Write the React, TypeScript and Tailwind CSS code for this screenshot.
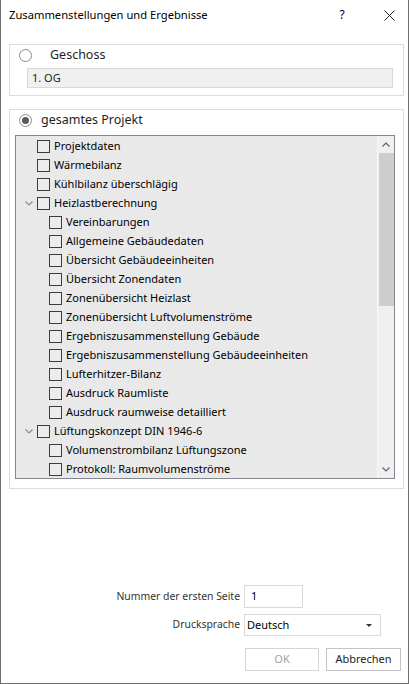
import React from 'react';

type Item = { label: string; level: 0 | 1; expander?: boolean };

const items: Item[] = [
  { label: 'Projektdaten', level: 0 },
  { label: 'Wärmebilanz', level: 0 },
  { label: 'Kühlbilanz überschlägig', level: 0 },
  { label: 'Heizlastberechnung', level: 0, expander: true },
  { label: 'Vereinbarungen', level: 1 },
  { label: 'Allgemeine Gebäudedaten', level: 1 },
  { label: 'Übersicht Gebäudeeinheiten', level: 1 },
  { label: 'Übersicht Zonendaten', level: 1 },
  { label: 'Zonenübersicht Heizlast', level: 1 },
  { label: 'Zonenübersicht Luftvolumenströme', level: 1 },
  { label: 'Ergebniszusammenstellung Gebäude', level: 1 },
  { label: 'Ergebniszusammenstellung Gebäudeeinheiten', level: 1 },
  { label: 'Lufterhitzer-Bilanz', level: 1 },
  { label: 'Ausdruck Raumliste', level: 1 },
  { label: 'Ausdruck raumweise detailliert', level: 1 },
  { label: 'Lüftungskonzept DIN 1946-6', level: 0, expander: true },
  { label: 'Volumenstrombilanz Lüftungszone', level: 1 },
  { label: 'Protokoll: Raumvolumenströme', level: 1 },
];

const Chevron = ({ dir, className }: { dir: 'up' | 'down'; className?: string }) => (
  <svg width="8" height="5" viewBox="0 0 8 5" className={className}>
    <path
      d={dir === 'down' ? 'M0.5 0.5 L4 4 L7.5 0.5' : 'M0.5 4.5 L4 1 L7.5 4.5'}
      fill="none"
      stroke="currentColor"
      strokeWidth="1.2"
    />
  </svg>
);

const Radio = ({ checked }: { checked?: boolean }) => (
  <span className="w-[13px] h-[13px] rounded-full border border-[#8a8a8a] bg-white flex items-center justify-center shrink-0">
    {checked && <span className="w-[7px] h-[7px] rounded-full bg-[#5a5a5a]" />}
  </span>
);

const TreeRow = ({ item }: { item: Item }) => (
  <div className="h-[19px] flex items-center">
    <span className={item.level === 0 ? 'w-[21px] shrink-0 flex justify-end pr-[4px]' : 'w-[33px] shrink-0'}>
      {item.level === 0 && item.expander && <Chevron dir="down" className="text-[#8c8c8c]" />}
    </span>
    <span className="w-[13px] h-[13px] border border-[#3c3c3c] bg-[#ececec] shrink-0" />
    <span className="ml-[4px] text-[11px] text-black whitespace-nowrap">{item.label}</span>
  </div>
);

export default function App() {
  return (
    <div className="w-[409px] h-[684px] bg-white border-x border-b border-[#6e6e6e] flex flex-col font-['Noto_Sans','Liberation_Sans',sans-serif] text-[11px] text-black">
      <div className="h-[30px] shrink-0 flex items-center pl-[8px]">
        <span className="text-[11.2px] flex-1">Zusammenstellungen und Ergebnisse</span>
        <span className="w-[20px] text-center text-[12px] mr-[32px]">?</span>
        <svg width="11" height="11" viewBox="0 0 11 11" className="mr-[13px]">
          <path d="M0.5 0.5 L10.5 10.5 M10.5 0.5 L0.5 10.5" stroke="#222" strokeWidth="1" fill="none" />
        </svg>
      </div>

      <div className="flex-1 flex flex-col pl-[8px] pr-[4px]">
        <div className="mt-[14px] h-[52px] border border-[#dcdcdc] pt-[3px] pl-[9px] pr-[10px]">
          <div className="h-[14px] flex items-center">
            <Radio />
            <span className="ml-[18px] text-[12.5px] text-[#1e1e1e]">Geschoss</span>
          </div>
          <div className="mt-[6px] ml-[8px] h-[20px] bg-[#f0f0f0] border border-[#d9d9d9] flex items-center pl-[4px] text-[11px] text-[#222]">
            1. OG
          </div>
        </div>

        <div className="mt-[13px] h-[380px] border border-[#dcdcdc] pt-[3px] px-[5px]">
          <div className="h-[14px] flex items-center pl-[4px]">
            <Radio checked />
            <span className="ml-[9px] text-[12.5px] text-[#1e1e1e]">gesamtes Projekt</span>
          </div>
          <div className="mt-[8px] h-[344px] w-[380px] border border-[#828790] bg-[#e9e9e9] flex">
            <div className="flex-1 pt-[1px] overflow-hidden">
              {items.map((item) => (
                <TreeRow key={item.label} item={item} />
              ))}
            </div>
            <div className="w-[17px] bg-[#f0f0f0] border-l border-[#f7f7f7] flex flex-col items-center">
              <div className="h-[17px] flex items-center justify-center text-[#606060]">
                <Chevron dir="up" />
              </div>
              <div className="w-[15px] h-[153px] bg-[#cdcdcd]" />
              <div className="flex-1" />
              <div className="h-[17px] flex items-center justify-center text-[#606060]">
                <Chevron dir="down" />
              </div>
            </div>
          </div>
        </div>

        <div className="flex-1" />

        <div className="flex flex-col pr-[3px] pb-[12px]">
          <div className="flex items-center justify-end pr-[98px]">
            <span className="text-[10.4px] text-[#333] mr-[4px]">Nummer der ersten Seite</span>
            <div className="w-[59px] h-[23px] border border-[#d9d9d9] bg-white flex items-center pl-[6px] text-[11px]">1</div>
          </div>
          <div className="mt-[6px] flex items-center justify-end pr-[20px]">
            <span className="text-[10.4px] text-[#333] mr-[4px]">Drucksprache</span>
            <div className="w-[137px] h-[22px] border border-[#d9d9d9] bg-white flex items-center pl-[2px] pr-[8px] text-[11px]">
              <span className="flex-1">Deutsch</span>
              <svg width="6" height="3" viewBox="0 0 6 3">
                <path d="M0 0 L6 0 L3 3 Z" fill="#333" />
              </svg>
            </div>
          </div>
          <div className="mt-[12px] flex justify-end gap-[7px]">
            <div className="w-[74px] h-[23px] border border-[#d5d5d5] bg-white flex items-center justify-center text-[11px] text-[#a0a0a0]">OK</div>
            <div className="w-[75px] h-[23px] border border-[#c4c4c4] bg-white flex items-center justify-center text-[11px] text-[#222]">Abbrechen</div>
          </div>
        </div>
      </div>
    </div>
  );
}
